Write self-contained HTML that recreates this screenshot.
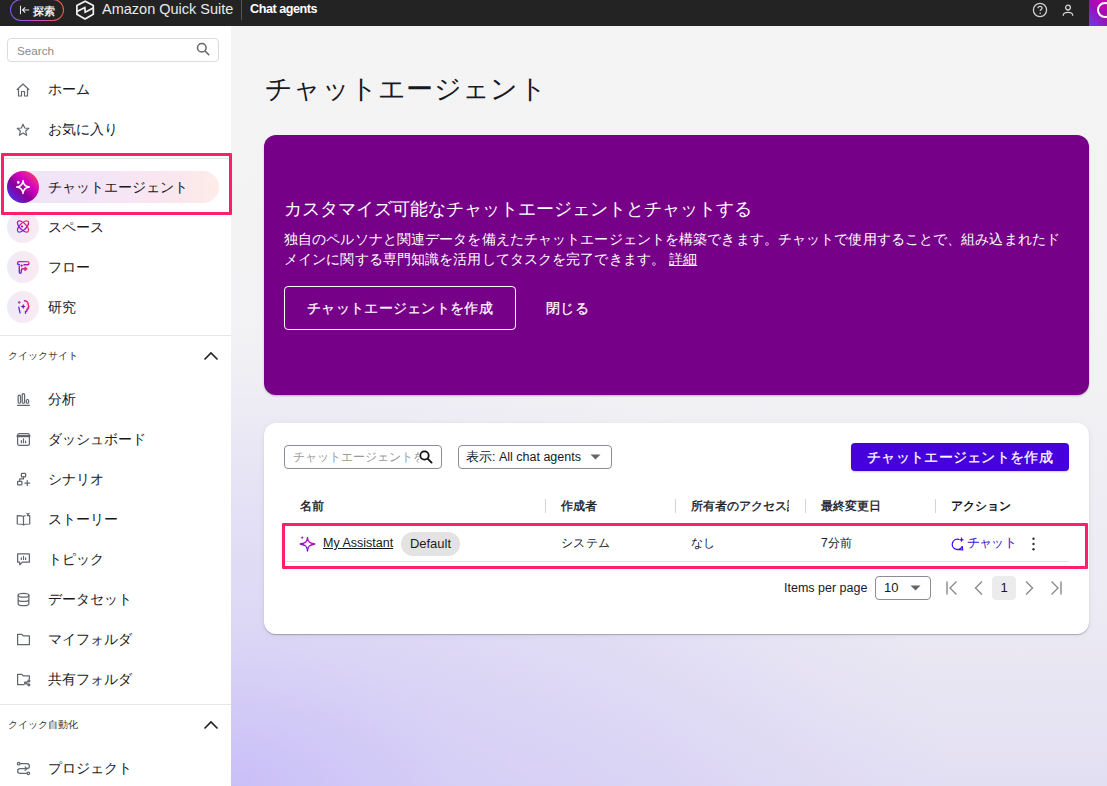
<!DOCTYPE html>
<html lang="ja">
<head>
<meta charset="utf-8">
<style>
*{box-sizing:border-box;margin:0;padding:0}
html,body{width:1107px;height:786px;overflow:hidden}
body{font-family:"Liberation Sans",sans-serif;color:#16191f;position:relative;background:#f4f4f4}
.abs{position:absolute}
#top{left:0;top:0;width:1107px;height:26px;z-index:5;background:#232323}
#main{left:231px;top:25px;width:876px;height:761px;background:radial-gradient(ellipse 720px 460px at 0% 100%,rgba(180,165,252,.55) 0%,rgba(180,165,252,.28) 32%,rgba(180,165,252,.18) 60%,rgba(180,165,252,.05) 86%,rgba(180,165,252,0) 100%),linear-gradient(180deg,#f4f4f4 0%,#f2f2f4 45%,#eceaf3 77%,#e3dff3 100%)}
#side{left:0;top:25px;width:232px;height:761px;background:#fff;border-right:1px solid #e4e4e4}
.nav{position:absolute;left:0;width:231px;height:40px}
.nav .t{position:absolute;left:47.5px;top:0;line-height:40px;font-size:14px;letter-spacing:0.1px;color:#16191f}
.nav .ic{position:absolute;left:16px;top:13px;width:14px;height:14px}
.circ{position:absolute;left:7px;top:4px;width:32px;height:32px;border-radius:50%;background:linear-gradient(90deg,#efeaf8,#fbeaf1)}
.sect{position:absolute;left:8px;font-size:10px;color:#333}
.div{position:absolute;left:0;width:231px;height:1px;background:#e6e6e6}
</style>
</head>
<body>
<div id="top" class="abs">
 <div class="abs" style="left:10px;top:-1px;width:54px;height:22px;border-radius:11px;background:linear-gradient(90deg,#7b5cf0,#c84cc8 55%,#f2603a)"></div>
 <div class="abs" style="left:11px;top:0px;width:52px;height:20px;border-radius:10px;background:#232323"></div>
 <svg class="abs" style="left:19px;top:5px" width="11" height="10" viewBox="0 0 11 10"><path d="M1.5 0.8V9.2M10.2 5H3.5M6.2 2.3L3.5 5L6.2 7.7" stroke="#e6e6e6" stroke-width="1.1" fill="none"/></svg>
 <div class="abs" style="left:33px;top:4px;font-size:10.5px;line-height:14px;color:#eee;font-weight:bold">探索</div>
 <svg class="abs" style="left:72px;top:0px" width="26" height="24" viewBox="0 0 26 24" fill="none" stroke="#f4f4f4" stroke-width="1.7"><path d="M13.2 1.2L21.3 5.6V14.3L13 19L4.9 14.3V5.6Z" stroke-linejoin="round"/><path d="M5 11.5L12.8 7.5L13.2 12.2L21.2 8.1" stroke-linejoin="miter"/></svg>
 <div class="abs" style="left:102px;top:1px;font-size:14.5px;line-height:17px;color:#e9e9e9">Amazon Quick Suite</div>
 <div class="abs" style="left:241px;top:0;width:1px;height:20px;background:#555"></div>
 <div class="abs" style="left:250px;top:2px;font-size:12.6px;letter-spacing:-0.45px;line-height:15px;color:#fff;font-weight:bold">Chat agents</div>
 <svg class="abs" style="left:1032px;top:2px" width="16" height="16" viewBox="0 0 16 16"><circle cx="8" cy="8" r="6.6" stroke="#cfcfcf" stroke-width="1.3" fill="none"/><path d="M6 6.3C6 5 7 4.4 8 4.4C9.1 4.4 10 5.1 10 6.2C10 7.5 8.2 7.6 8.2 9.1" stroke="#cfcfcf" stroke-width="1.3" fill="none"/><circle cx="8.2" cy="11.3" r="0.8" fill="#cfcfcf"/></svg>
 <svg class="abs" style="left:1061px;top:3px" width="14" height="15" viewBox="0 0 14 15"><circle cx="7" cy="4.6" r="2.4" stroke="#d4d4d4" stroke-width="1.3" fill="none"/><path d="M2.3 12.8V12.2C2.3 10.4 4.2 9.3 7 9.3C9.8 9.3 11.7 10.4 11.7 12.2V12.8" stroke="#d4d4d4" stroke-width="1.3" fill="none"/></svg>
 <div class="abs" style="left:1089px;top:0;width:18px;height:26px;background:linear-gradient(225deg,#d000b8 0%,#9a10b0 45%,#6a3cf0 100%);overflow:hidden"><div class="abs" style="left:7.5px;top:2px;width:16px;height:16px;border-radius:50%;border:2px solid #fff"></div></div>
</div>
<div id="side" class="abs"><div class="abs" style="left:7px;top:13px;width:212px;height:24px;border:1px solid #dcdcdc;border-radius:4px"></div><div class="abs" style="left:17px;top:18px;font-size:11.7px;line-height:16px;color:#8a8a8a">Search</div><svg class="abs" style="left:196px;top:17px" width="14" height="14" viewBox="0 0 14 14" fill="none" stroke="#666" stroke-width="1.5"><circle cx="5.8" cy="5.8" r="4.3"/><path d="M9 9L12.8 12.8" stroke-linecap="round"/></svg><div class="nav" style="top:44px"><svg class="abs" style="left:16px;top:14px" width="14" height="14" viewBox="0 0 14 14" fill="none" stroke="#62676e" stroke-width="1.2" stroke-linejoin="round" stroke-linecap="round"><path d="M1.2 6.5L7 1L12.8 6.5M2.5 5.3V13H5.5V8.5H8.5V13H11.5V5.3"/></svg><div class="t">ホーム</div></div>
<div class="nav" style="top:84px"><svg class="abs" style="left:16px;top:14px" width="14" height="14" viewBox="0 0 14 14" fill="none" stroke="#62676e" stroke-width="1.2" stroke-linejoin="round" stroke-linecap="round"><path d="M7 1.2L8.7 5L12.8 5.3L9.7 8L10.6 12.3L7 10.1L3.4 12.3L4.3 8L1.2 5.3L5.3 5Z"/></svg><div class="t">お気に入り</div></div>
<div class="div" style="top:133px"></div><div class="nav" style="top:142px"><div class="abs" style="left:7px;top:4px;width:212px;height:32px;border-radius:16px;background:linear-gradient(90deg,#ede4f7 0%,#f4e5f6 45%,#fae6f0 75%,#fdece8 100%)"></div><div class="circ" style="background:linear-gradient(45deg,#4a30f5 8%,#8a0098 40%,#d000c0 62%,#e8209a 78%,#ff4a1a 95%)"></div><svg class="abs" style="left:15px;top:12px" width="16" height="16" viewBox="0 0 16 16" fill="none"><path d="M8 1.6Q8.6 7.4 14.4 8Q8.6 8.6 8 14.4Q7.4 8.6 1.6 8Q7.4 7.4 8 1.6Z" stroke="#fff" stroke-width="1.5" stroke-linejoin="round"/><circle cx="3.3" cy="3.4" r="1.3" fill="#fff"/></svg><div class="t">チャットエージェント</div></div>
<div class="nav" style="top:182px"><div class="circ"></div><svg class="abs" style="left:15px;top:12px" width="16" height="16" viewBox="0 0 16 16" fill="none" stroke-width="1.3"><defs><linearGradient id="g1" x1="0" y1="1" x2="1" y2="0"><stop offset="0" stop-color="#4a3af8"/><stop offset=".5" stop-color="#b808b8"/><stop offset="1" stop-color="#ff4a1a"/></linearGradient></defs><ellipse cx="8" cy="7.5" rx="7.2" ry="3.3" transform="rotate(-45 8 7.5)" stroke="url(#g1)"/><ellipse cx="8" cy="7.5" rx="7.2" ry="3.3" transform="rotate(45 8 7.5)" stroke="url(#g1)"/><circle cx="7" cy="7.5" r="1.1" fill="#a000b0"/></svg><div class="t">スペース</div></div>
<div class="nav" style="top:222px"><div class="circ"></div><svg class="abs" style="left:15px;top:12px" width="16" height="16" viewBox="0 0 16 16" fill="none" stroke="url(#g1)" stroke-width="1.4" stroke-linejoin="round" stroke-linecap="round"><path d="M4.5 5.8C3 5.8 2.6 5 2.6 4.2C2.6 3.2 3.2 2.6 4.2 2.6H12.6C13.6 2.6 14 3.3 14 4.2C14 5.1 13.6 5.8 12.6 5.8H9"/><path d="M4.3 7.5V13.2C4.3 14 5 14.2 5.3 14.2C6 14.2 6.3 13.6 6.3 13V11.5C6.3 10.2 7 9.8 8 9.8H11.5M10 8.3L11.8 9.8L10 11.3"/><path d="M6.8 4.8L7.3 6.2L8.7 6.7L7.3 7.2L6.8 8.6L6.3 7.2L4.9 6.7L6.3 6.2Z" fill="#a000b0" stroke="none"/></svg><div class="t">フロー</div></div>
<div class="nav" style="top:262px"><div class="circ"></div><svg class="abs" style="left:15px;top:12px" width="16" height="16" viewBox="0 0 16 16" fill="none" stroke="url(#g1)" stroke-width="1.4" stroke-linejoin="round" stroke-linecap="round"><path d="M9.5 1.8C12 2 13.3 3.8 13.3 6.2L14 7.8L13 8.6L13.3 9.6L12 10.4V11.6C12 12.1 11.5 12.5 11 12.5H10.5V14.2"/><path d="M3.8 8.2L5 13.8" stroke="#4a3af8"/><path d="M8.2 4.8L8.9 6.8L10.9 7.5L8.9 8.2L8.2 10.2L7.5 8.2L5.5 7.5L7.5 6.8Z" fill="#8a00b8" stroke="none"/><path d="M4.2 1.8L5.8 3.4L4.2 5L2.6 3.4Z" fill="#b040c0" stroke="none"/></svg><div class="t">研究</div></div>
<div class="div" style="top:310px"></div><div class="sect" style="top:323px;line-height:16px">クイックサイト</div><svg class="abs" style="left:203px;top:326px" width="16" height="10" viewBox="0 0 16 10" fill="none" stroke="#222" stroke-width="1.6"><path d="M1.5 8.5L8 2L14.5 8.5"/></svg><div class="nav" style="top:354px"><svg class="abs" style="left:15.5px;top:12.5px" width="15" height="15" viewBox="0 0 14 14" fill="none" stroke="#62676e" stroke-width="1.15" stroke-linejoin="round" stroke-linecap="round"><path d="M1.5 12.5H12.5"/><rect x="2" y="3" width="2.2" height="7.5" rx="1"/><rect x="5.8" y="1.5" width="2.2" height="9" rx="1"/><rect x="9.6" y="7" width="2.2" height="3.5" rx="1"/></svg><div class="t">分析</div></div>
<div class="nav" style="top:394px"><svg class="abs" style="left:15.5px;top:12.5px" width="15" height="15" viewBox="0 0 14 14" fill="none" stroke="#62676e" stroke-width="1.15" stroke-linejoin="round" stroke-linecap="round"><rect x="1.5" y="1.5" width="11" height="11" rx="1.5"/><path d="M1.5 3.8H12.5" stroke-width="2.2"/><path d="M5 10V8M7 10V6.5M9 10V8.5"/></svg><div class="t">ダッシュボード</div></div>
<div class="nav" style="top:434px"><svg class="abs" style="left:15.5px;top:12.5px" width="15" height="15" viewBox="0 0 14 14" fill="none" stroke="#62676e" stroke-width="1.15" stroke-linejoin="round" stroke-linecap="round"><rect x="5" y="1.2" width="4" height="3.3" rx=".6"/><rect x="1.5" y="8.8" width="4" height="3.3" rx=".6"/><path d="M7 4.5V6.5H3.5V8.8M10.5 8V12.5M8.3 10.3H12.7"/></svg><div class="t">シナリオ</div></div>
<div class="nav" style="top:474px"><svg class="abs" style="left:15.5px;top:12.5px" width="15" height="15" viewBox="0 0 14 14" fill="none" stroke="#62676e" stroke-width="1.15" stroke-linejoin="round" stroke-linecap="round"><path d="M7 4.2C6.2 3.5 5 3.3 1.2 3.3V11.2C5 11.2 6.2 11.5 7 12.2C7.8 11.5 9 11.2 12.8 11.2V3.3C11.8 3.3 11 3.3 10.5 3.4M7 4.2V12.2M7 4.2C7.5 3.8 8 3.6 8.6 3.5"/><path d="M10.2 1.2L11.2 2.4L12.2 1.2"/></svg><div class="t">ストーリー</div></div>
<div class="nav" style="top:514px"><svg class="abs" style="left:15.5px;top:12.5px" width="15" height="15" viewBox="0 0 14 14" fill="none" stroke="#62676e" stroke-width="1.15" stroke-linejoin="round" stroke-linecap="round"><path d="M1.5 1.8H12.5V9.5H6L3.5 12V9.5H1.5Z"/><path d="M5 7V5.5M7 7V4M9 7V5.5"/></svg><div class="t">トピック</div></div>
<div class="nav" style="top:554px"><svg class="abs" style="left:15.5px;top:12.5px" width="15" height="15" viewBox="0 0 14 14" fill="none" stroke="#62676e" stroke-width="1.15" stroke-linejoin="round" stroke-linecap="round"><ellipse cx="7" cy="3" rx="5" ry="1.8"/><path d="M2 3V11C2 12 4.2 12.8 7 12.8C9.8 12.8 12 12 12 11V3M2 7C2 8 4.2 8.8 7 8.8C9.8 8.8 12 8 12 7"/></svg><div class="t">データセット</div></div>
<div class="nav" style="top:594px"><svg class="abs" style="left:15.5px;top:12.5px" width="15" height="15" viewBox="0 0 14 14" fill="none" stroke="#62676e" stroke-width="1.15" stroke-linejoin="round" stroke-linecap="round"><path d="M1.5 2.2H5.5L6.8 3.6H12.5V11.8H1.5Z"/></svg><div class="t">マイフォルダ</div></div>
<div class="nav" style="top:634px"><svg class="abs" style="left:15.5px;top:12.5px" width="15" height="15" viewBox="0 0 14 14" fill="none" stroke="#62676e" stroke-width="1.15" stroke-linejoin="round" stroke-linecap="round"><path d="M7.5 11.8H1.5V2.2H5.5L6.8 3.6H12.5V6.5"/><circle cx="12" cy="8.3" r=".9"/><circle cx="12" cy="12" r=".9"/><circle cx="8.8" cy="10.2" r=".9"/><path d="M11.2 8.8L9.6 9.8M11.2 11.6L9.6 10.6"/></svg><div class="t">共有フォルダ</div></div>
<div class="div" style="top:679px"></div><div class="sect" style="top:692px;line-height:16px">クイック自動化</div><svg class="abs" style="left:203px;top:695px" width="16" height="10" viewBox="0 0 16 10" fill="none" stroke="#222" stroke-width="1.6"><path d="M1.5 8.5L8 2L14.5 8.5"/></svg><div class="nav" style="top:723px"><svg class="abs" style="left:15.5px;top:12.5px" width="15" height="15" viewBox="0 0 14 14" fill="none" stroke="#62676e" stroke-width="1.15" stroke-linejoin="round" stroke-linecap="round"><circle cx="2.5" cy="2.5" r="1.2"/><circle cx="11.5" cy="11.5" r="1.2"/><path d="M4 2.5H10C11.5 2.5 12.5 3.5 12.5 5C12.5 6.5 11.5 7.2 10 7.2H4C2.5 7.2 1.5 8 1.5 9.5C1.5 11 2.5 11.5 4 11.5H10"/><path d="M8.5 5.5L10 7.2L8.5 8.8"/></svg><div class="t">プロジェクト</div></div>
</div>
<div id="main" class="abs"><div class="abs" style="left:34px;top:45px;font-size:27px;letter-spacing:0.3px;line-height:38px;color:#16191f;white-space:nowrap">チャットエージェント</div><div class="abs" style="left:33px;top:110px;width:825px;height:260px;border-radius:12px;background:#770088;box-shadow:0 1px 2px rgba(0,0,0,.25)"></div><div class="abs" style="left:53px;top:171px;font-size:18px;line-height:26px;color:#fff;white-space:nowrap">カスタマイズ可能なチャットエージェントとチャットする</div><div class="abs" style="left:53px;top:204px;width:800px;font-size:14px;letter-spacing:0.11px;line-height:20px;color:#fff">独自のペルソナと関連データを備えたチャットエージェントを構築できます。チャットで使用することで、組み込まれたド<br>メインに関する専門知識を活用してタスクを完了できます。 <span style="text-decoration:underline">詳細</span></div><div class="abs" style="left:53px;top:261px;width:232px;height:44px;border:1px solid #fff;border-radius:4px;font-size:14px;letter-spacing:0.3px;line-height:42px;color:#fff;text-align:center;-webkit-text-stroke:0.2px #fff">チャットエージェントを作成</div><div class="abs" style="left:315px;top:273px;font-size:14px;letter-spacing:0.3px;line-height:20px;color:#fff;-webkit-text-stroke:0.25px #fff">閉じる</div><div class="abs" style="left:33px;top:398px;width:825px;height:211px;border-radius:12px;background:#fff;box-shadow:0 1px 1px rgba(0,0,0,.25),0 1px 6px rgba(0,0,0,.06)"></div><div class="abs" style="left:53px;top:420px;width:158px;height:24px;border:1px solid #8c8c94;border-radius:4px;overflow:hidden"><div class="abs" style="left:8px;top:3px;width:126px;overflow:hidden;white-space:nowrap;font-size:12px;line-height:16px;color:#9a9a9a">チャットエージェントを検索</div></div><svg class="abs" style="left:188px;top:425px" width="14" height="14" viewBox="0 0 14 14" fill="none" stroke="#111" stroke-width="1.8"><circle cx="5.5" cy="5.5" r="4.2"/><path d="M8.6 8.6L12.6 12.6" stroke-linecap="round"/></svg><div class="abs" style="left:227px;top:420px;width:154px;height:24px;border:1px solid #8c8c94;border-radius:4px"></div><div class="abs" style="left:235px;top:424px;font-size:12.5px;line-height:16px;color:#16191f;white-space:nowrap">表示: All chat agents</div><svg class="abs" style="left:359px;top:429px" width="11" height="6" viewBox="0 0 11 6"><path d="M0.5 0.5H10.5L5.5 5.5Z" fill="#666"/></svg><div class="abs" style="left:620px;top:418px;width:218px;height:28px;border-radius:4px;background:#4600dc;box-shadow:0 1px 2px rgba(0,0,0,.2);font-size:14px;letter-spacing:0.3px;line-height:28px;color:#fff;text-align:center;-webkit-text-stroke:0.25px #fff">チャットエージェントを作成</div><div class="abs" style="left:69px;top:472px;font-size:12px;line-height:18px;color:#16191f;white-space:nowrap;-webkit-text-stroke:0.35px #16191f">名前</div><div class="abs" style="left:330px;top:472px;font-size:12px;line-height:18px;color:#16191f;white-space:nowrap;-webkit-text-stroke:0.35px #16191f">作成者</div><div class="abs" style="left:460px;top:472px;font-size:12px;line-height:18px;color:#16191f;white-space:nowrap;-webkit-text-stroke:0.35px #16191f;width:98px;overflow:hidden">所有者のアクセス許可</div><div class="abs" style="left:590px;top:472px;font-size:12px;line-height:18px;color:#16191f;white-space:nowrap;-webkit-text-stroke:0.35px #16191f">最終変更日</div><div class="abs" style="left:720px;top:472px;font-size:12px;line-height:18px;color:#16191f;white-space:nowrap;font-weight:bold">アクション</div><div class="abs" style="left:314px;top:474px;width:1px;height:14px;background:#d5d5d5"></div><div class="abs" style="left:444px;top:474px;width:1px;height:14px;background:#d5d5d5"></div><div class="abs" style="left:574px;top:474px;width:1px;height:14px;background:#d5d5d5"></div><div class="abs" style="left:704px;top:474px;width:1px;height:14px;background:#d5d5d5"></div><svg class="abs" style="left:68px;top:510px" width="18" height="18" viewBox="0 0 18 18" fill="none"><defs><linearGradient id="g2" x1="0" y1="1" x2="1" y2="0"><stop offset="0" stop-color="#5a1ed8"/><stop offset=".6" stop-color="#a010c0"/><stop offset="1" stop-color="#e010b0"/></linearGradient></defs><path d="M8.5 2.5C9 6.8 10 7.8 15.8 9C10 10.2 9 11.2 8.5 16C8 11.2 7 10.2 1.2 9C7 7.8 8 6.8 8.5 2.5Z" stroke="url(#g2)" stroke-width="1.3" stroke-linejoin="round"/><path d="M3.2 0.8L3.7 2.2L5 2.7L3.7 3.2L3.2 4.6L2.7 3.2L1.4 2.7L2.7 2.2Z" fill="url(#g2)"/></svg><div class="abs" style="left:92px;top:510px;font-size:12.5px;line-height:17px;color:#16191f;text-decoration:underline;white-space:nowrap">My Assistant</div><div class="abs" style="left:170px;top:507px;width:59px;height:24px;border-radius:12px;background:#e3e3e3;font-size:13px;line-height:24px;color:#1d1d1f;text-align:center">Default</div><div class="abs" style="left:330px;top:509px;font-size:12px;letter-spacing:0.3px;line-height:18px;color:#16191f;white-space:nowrap">システム</div><div class="abs" style="left:460px;top:509px;font-size:12px;letter-spacing:0.3px;line-height:18px;color:#16191f;white-space:nowrap">なし</div><div class="abs" style="left:590px;top:509px;font-size:12px;letter-spacing:0.3px;line-height:18px;color:#16191f;white-space:nowrap">7分前</div><svg class="abs" style="left:719px;top:512px" width="15" height="15" viewBox="0 0 15 15" fill="none" stroke="#4010d8" stroke-width="1.3" stroke-linecap="round"><path d="M8.8 2.3A5.2 5.2 0 1 0 12.3 9.3L12.6 12.8L9.5 12.6"/><path d="M11.5 0.8L12 2.3L13.5 2.8L12 3.3L11.5 4.8L11 3.3L9.5 2.8L11 2.3Z" fill="#4010d8" stroke-width=".6"/></svg><div class="abs" style="left:736px;top:509px;font-size:13px;letter-spacing:-0.8px;line-height:18px;color:#4010d8;white-space:nowrap">チャット</div><svg class="abs" style="left:800px;top:511px" width="5" height="16" viewBox="0 0 5 16" fill="#333"><circle cx="2.5" cy="2.8" r="1.2"/><circle cx="2.5" cy="8" r="1.2"/><circle cx="2.5" cy="13.2" r="1.2"/></svg><div class="abs" style="left:53px;top:536px;width:785px;height:1px;background:#e2e2e2"></div><div class="abs" style="left:553px;top:554px;font-size:12.5px;line-height:18px;color:#16191f;white-space:nowrap">Items per page</div><div class="abs" style="left:644px;top:551px;width:56px;height:24px;border:1px solid #8c8c94;border-radius:4px"></div><div class="abs" style="left:653px;top:554px;font-size:13px;line-height:18px;color:#16191f">10</div><svg class="abs" style="left:679px;top:560px" width="11" height="6" viewBox="0 0 11 6"><path d="M0.5 0.5H10.5L5.5 5.5Z" fill="#666"/></svg><svg class="abs" style="left:715px;top:555px" width="12" height="16" viewBox="0 0 12 16" fill="none" stroke="#8a8a8a" stroke-width="1.4"><path d="M1 1.5V14.5M10.5 1.5L4 8L10.5 14.5"/></svg><svg class="abs" style="left:742px;top:555px" width="10" height="16" viewBox="0 0 10 16" fill="none" stroke="#8a8a8a" stroke-width="1.4"><path d="M9 1.5L2.5 8L9 14.5"/></svg><div class="abs" style="left:761px;top:551px;width:24px;height:24px;border-radius:4px;background:#ececec;font-size:13px;line-height:24px;color:#16191f;text-align:center">1</div><svg class="abs" style="left:794px;top:555px" width="10" height="16" viewBox="0 0 10 16" fill="none" stroke="#8a8a8a" stroke-width="1.4"><path d="M1 1.5L7.5 8L1 14.5"/></svg><svg class="abs" style="left:819px;top:555px" width="12" height="16" viewBox="0 0 12 16" fill="none" stroke="#8a8a8a" stroke-width="1.4"><path d="M11 1.5V14.5M1.5 1.5L8 8L1.5 14.5"/></svg></div>
<div class="abs" style="left:1px;top:153px;width:231px;height:62px;border:3px solid #ff2069;border-radius:1px"></div>
<div class="abs" style="left:282px;top:523px;width:806px;height:46px;border:3px solid #ff2069;border-radius:1px"></div>
</body>
</html>
